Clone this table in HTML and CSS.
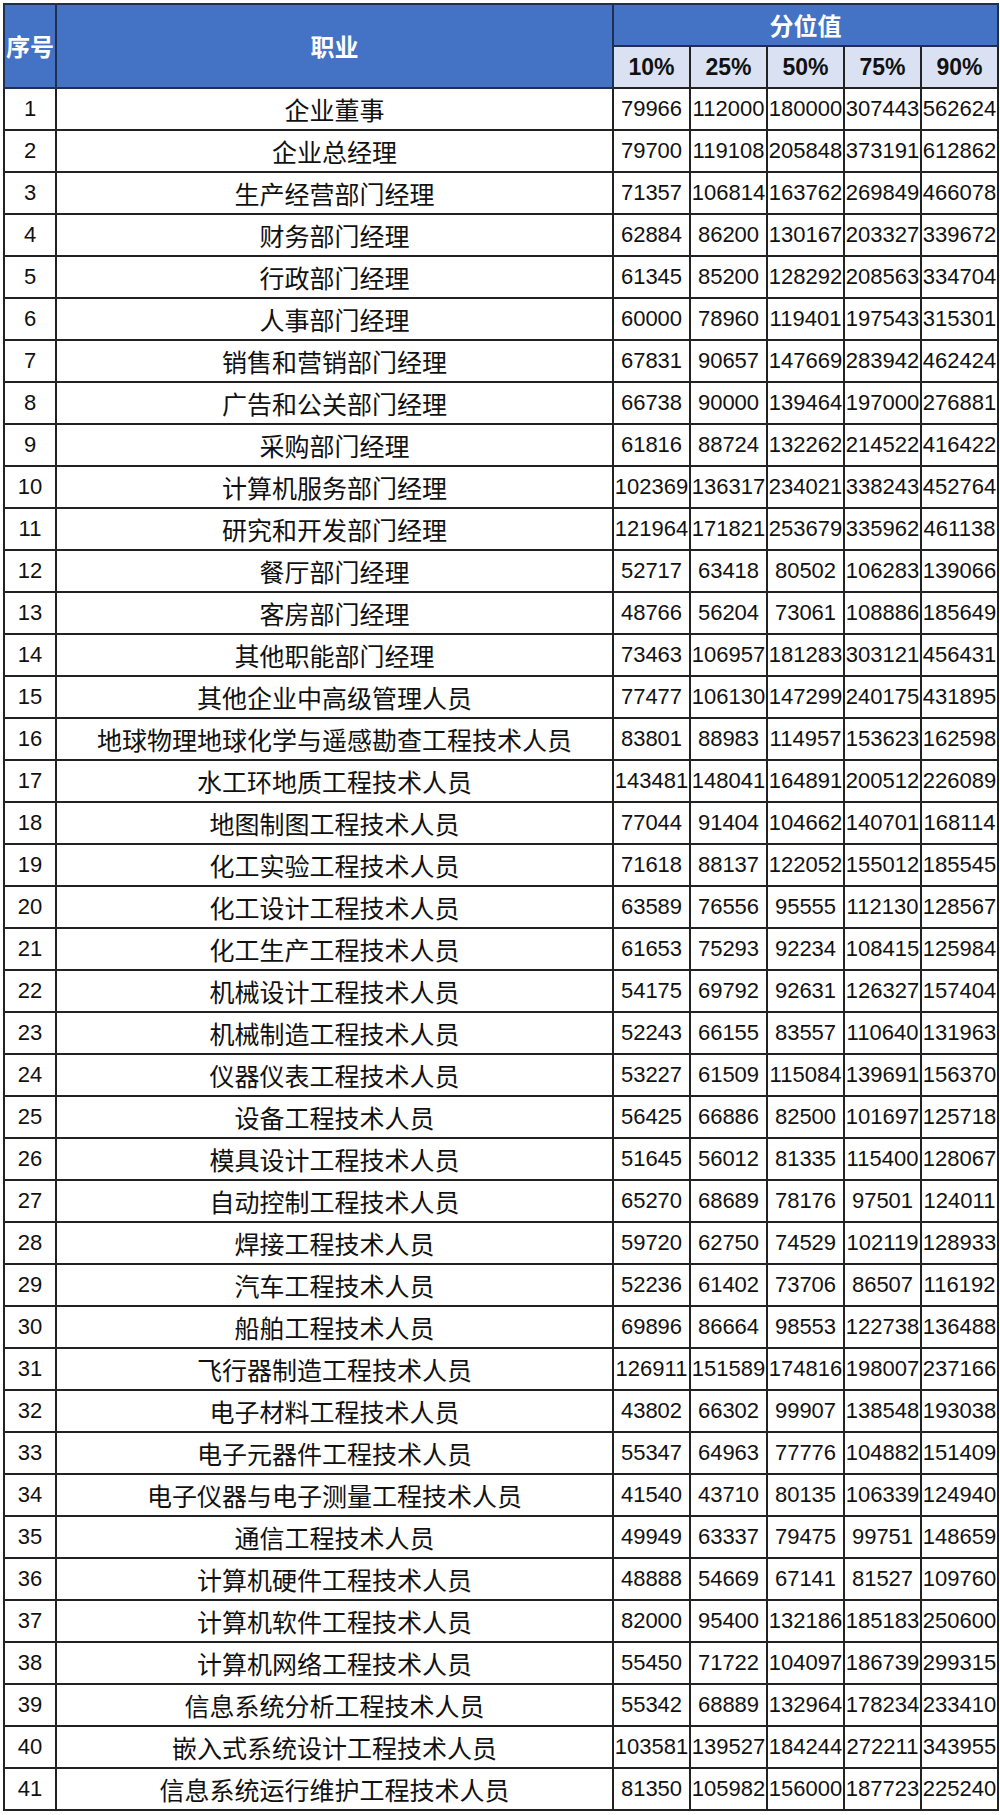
FILE: index.html
```html
<!DOCTYPE html>
<html lang="zh">
<head>
<meta charset="utf-8">
<link rel="stylesheet" href="styles.css">
</head>
<body>
<table class="sheet">
<colgroup>
<col class="c-no"><col class="c-job"><col class="c-num"><col class="c-num"><col class="c-num"><col class="c-num"><col class="c-num">
</colgroup>
<thead>
<tr class="h1"><th rowspan="2" class="hb">序号</th><th rowspan="2" class="hb">职业</th><th colspan="5" class="hb">分位值</th></tr>
<tr class="h2"><th>10%</th><th>25%</th><th>50%</th><th>75%</th><th>90%</th></tr>
</thead>
<tbody>
<tr><td>1</td><td class="job">企业董事</td><td>79966</td><td>112000</td><td>180000</td><td>307443</td><td>562624</td></tr>
<tr><td>2</td><td class="job">企业总经理</td><td>79700</td><td>119108</td><td>205848</td><td>373191</td><td>612862</td></tr>
<tr><td>3</td><td class="job">生产经营部门经理</td><td>71357</td><td>106814</td><td>163762</td><td>269849</td><td>466078</td></tr>
<tr><td>4</td><td class="job">财务部门经理</td><td>62884</td><td>86200</td><td>130167</td><td>203327</td><td>339672</td></tr>
<tr><td>5</td><td class="job">行政部门经理</td><td>61345</td><td>85200</td><td>128292</td><td>208563</td><td>334704</td></tr>
<tr><td>6</td><td class="job">人事部门经理</td><td>60000</td><td>78960</td><td>119401</td><td>197543</td><td>315301</td></tr>
<tr><td>7</td><td class="job">销售和营销部门经理</td><td>67831</td><td>90657</td><td>147669</td><td>283942</td><td>462424</td></tr>
<tr><td>8</td><td class="job">广告和公关部门经理</td><td>66738</td><td>90000</td><td>139464</td><td>197000</td><td>276881</td></tr>
<tr><td>9</td><td class="job">采购部门经理</td><td>61816</td><td>88724</td><td>132262</td><td>214522</td><td>416422</td></tr>
<tr><td>10</td><td class="job">计算机服务部门经理</td><td>102369</td><td>136317</td><td>234021</td><td>338243</td><td>452764</td></tr>
<tr><td>11</td><td class="job">研究和开发部门经理</td><td>121964</td><td>171821</td><td>253679</td><td>335962</td><td>461138</td></tr>
<tr><td>12</td><td class="job">餐厅部门经理</td><td>52717</td><td>63418</td><td>80502</td><td>106283</td><td>139066</td></tr>
<tr><td>13</td><td class="job">客房部门经理</td><td>48766</td><td>56204</td><td>73061</td><td>108886</td><td>185649</td></tr>
<tr><td>14</td><td class="job">其他职能部门经理</td><td>73463</td><td>106957</td><td>181283</td><td>303121</td><td>456431</td></tr>
<tr><td>15</td><td class="job">其他企业中高级管理人员</td><td>77477</td><td>106130</td><td>147299</td><td>240175</td><td>431895</td></tr>
<tr><td>16</td><td class="job">地球物理地球化学与遥感勘查工程技术人员</td><td>83801</td><td>88983</td><td>114957</td><td>153623</td><td>162598</td></tr>
<tr><td>17</td><td class="job">水工环地质工程技术人员</td><td>143481</td><td>148041</td><td>164891</td><td>200512</td><td>226089</td></tr>
<tr><td>18</td><td class="job">地图制图工程技术人员</td><td>77044</td><td>91404</td><td>104662</td><td>140701</td><td>168114</td></tr>
<tr><td>19</td><td class="job">化工实验工程技术人员</td><td>71618</td><td>88137</td><td>122052</td><td>155012</td><td>185545</td></tr>
<tr><td>20</td><td class="job">化工设计工程技术人员</td><td>63589</td><td>76556</td><td>95555</td><td>112130</td><td>128567</td></tr>
<tr><td>21</td><td class="job">化工生产工程技术人员</td><td>61653</td><td>75293</td><td>92234</td><td>108415</td><td>125984</td></tr>
<tr><td>22</td><td class="job">机械设计工程技术人员</td><td>54175</td><td>69792</td><td>92631</td><td>126327</td><td>157404</td></tr>
<tr><td>23</td><td class="job">机械制造工程技术人员</td><td>52243</td><td>66155</td><td>83557</td><td>110640</td><td>131963</td></tr>
<tr><td>24</td><td class="job">仪器仪表工程技术人员</td><td>53227</td><td>61509</td><td>115084</td><td>139691</td><td>156370</td></tr>
<tr><td>25</td><td class="job">设备工程技术人员</td><td>56425</td><td>66886</td><td>82500</td><td>101697</td><td>125718</td></tr>
<tr><td>26</td><td class="job">模具设计工程技术人员</td><td>51645</td><td>56012</td><td>81335</td><td>115400</td><td>128067</td></tr>
<tr><td>27</td><td class="job">自动控制工程技术人员</td><td>65270</td><td>68689</td><td>78176</td><td>97501</td><td>124011</td></tr>
<tr><td>28</td><td class="job">焊接工程技术人员</td><td>59720</td><td>62750</td><td>74529</td><td>102119</td><td>128933</td></tr>
<tr><td>29</td><td class="job">汽车工程技术人员</td><td>52236</td><td>61402</td><td>73706</td><td>86507</td><td>116192</td></tr>
<tr><td>30</td><td class="job">船舶工程技术人员</td><td>69896</td><td>86664</td><td>98553</td><td>122738</td><td>136488</td></tr>
<tr><td>31</td><td class="job">飞行器制造工程技术人员</td><td>126911</td><td>151589</td><td>174816</td><td>198007</td><td>237166</td></tr>
<tr><td>32</td><td class="job">电子材料工程技术人员</td><td>43802</td><td>66302</td><td>99907</td><td>138548</td><td>193038</td></tr>
<tr><td>33</td><td class="job">电子元器件工程技术人员</td><td>55347</td><td>64963</td><td>77776</td><td>104882</td><td>151409</td></tr>
<tr><td>34</td><td class="job">电子仪器与电子测量工程技术人员</td><td>41540</td><td>43710</td><td>80135</td><td>106339</td><td>124940</td></tr>
<tr><td>35</td><td class="job">通信工程技术人员</td><td>49949</td><td>63337</td><td>79475</td><td>99751</td><td>148659</td></tr>
<tr><td>36</td><td class="job">计算机硬件工程技术人员</td><td>48888</td><td>54669</td><td>67141</td><td>81527</td><td>109760</td></tr>
<tr><td>37</td><td class="job">计算机软件工程技术人员</td><td>82000</td><td>95400</td><td>132186</td><td>185183</td><td>250600</td></tr>
<tr><td>38</td><td class="job">计算机网络工程技术人员</td><td>55450</td><td>71722</td><td>104097</td><td>186739</td><td>299315</td></tr>
<tr><td>39</td><td class="job">信息系统分析工程技术人员</td><td>55342</td><td>68889</td><td>132964</td><td>178234</td><td>233410</td></tr>
<tr><td>40</td><td class="job">嵌入式系统设计工程技术人员</td><td>103581</td><td>139527</td><td>184244</td><td>272211</td><td>343955</td></tr>
<tr><td>41</td><td class="job">信息系统运行维护工程技术人员</td><td>81350</td><td>105982</td><td>156000</td><td>187723</td><td>225240</td></tr>
</tbody>
</table>
</body>
</html>
```

FILE: styles.css
```css
html, body {
  margin: 0;
  padding: 0;
  background: #ffffff;
}
body {
  padding: 3px 0 0 3px;
  font-family: "Liberation Sans", "Noto Sans CJK SC", sans-serif;
  color: #111111;
}
.sheet {
  border-collapse: collapse;
  table-layout: fixed;
  width: 993px;
}
.c-no { width: 52px; }
.c-job { width: 557px; }
.c-num { width: 77px; }
.sheet th, .sheet td {
  border: 2px solid #222222;
  padding: 0;
  text-align: center;
  vertical-align: middle;
  white-space: nowrap;
  overflow: hidden;
}
.sheet td {
  height: 40px;
  font-size: 22px;
  line-height: 40px;
}
.sheet td.job {
  font-size: 25px;
  font-family: "Noto Sans CJK SC", sans-serif;
  font-weight: 400;
}
.sheet th {
  height: 40px;
  font-family: "Noto Sans CJK SC", "Liberation Sans", sans-serif;
  font-weight: 700;
  line-height: 40px;
}
.sheet th.hb {
  background: #4472c4;
  color: #ffffff;
  font-size: 24px;
  border-color: #1f2f4f;
}
.sheet .h2 th {
  background: #d9e1f2;
  color: #111111;
  font-size: 23px;
  font-family: "Liberation Sans", sans-serif;
}
```
